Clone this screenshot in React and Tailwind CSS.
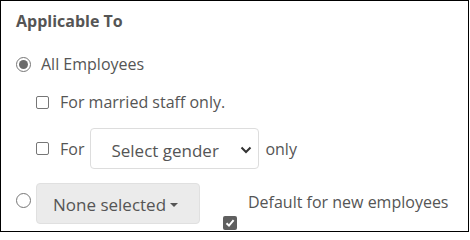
import React from "react";

function Radio({ checked }) {
  return (
    <div className="w-[15px] h-[15px] rounded-full border border-[#767676] bg-white flex items-center justify-center shrink-0">
      {checked && <div className="w-[9px] h-[9px] rounded-full bg-[#6b6b6b]" />}
    </div>
  );
}

function Box({ checked }) {
  if (checked) {
    return (
      <div className="w-[14px] h-[14px] rounded-[2px] bg-[#5f5f5f] flex items-center justify-center shrink-0">
        <svg width="10" height="10" viewBox="0 0 10 10">
          <path d="M1.5 5.2 L4 7.6 L8.6 2.2" fill="none" stroke="white" strokeWidth="2" />
        </svg>
      </div>
    );
  }
  return <div className="w-[13px] h-[13px] rounded-[2px] border border-[#767676] bg-white shrink-0" />;
}

export default function App() {
  return (
    <div
      className="w-[469px] h-[232px] border border-black bg-white text-[#555] flex flex-col pl-[15px] pt-[10px]"
      style={{ fontFamily: '"Open Sans", sans-serif' }}
    >
      <div className="text-[16px] leading-[20px] font-bold">Applicable To</div>
      <div className="mt-[22px] flex items-center h-[22px] text-[16px] leading-[22px]">
        <Radio checked />
        <span className="ml-[10px]">All Employees</span>
      </div>
      <div className="mt-[16px] ml-[20px] flex items-center h-[22px] text-[16px] leading-[22px]">
        <Box />
        <span className="ml-[11px]">For married staff only.</span>
      </div>
      <div className="mt-[15px] ml-[20px] flex items-center h-[41px] text-[16px] leading-[22px]">
        <Box />
        <span className="ml-[11px]">For</span>
        <div className="ml-[6px] w-[169px] h-[41px] rounded-[4px] border border-[#ddd] bg-white flex items-center pl-[20px] pr-[6px] pt-[4px] text-[17px]">
          <span className="flex-1">Select gender</span>
          <svg width="12" height="8" viewBox="0 0 12 8" className="mt-[-2px]">
            <path d="M1.5 1.5 L6 6 L10.5 1.5" fill="none" stroke="#333" strokeWidth="2" />
          </svg>
        </div>
        <span className="ml-[6px]">only</span>
      </div>
      <div className="mt-[14px] flex items-start text-[16px] leading-[22px]">
        <div className="mt-[10px]">
          <Radio />
        </div>
        <div className="ml-[5px] w-[164px] h-[41px] rounded-[4px] border border-[#e0e0e0] bg-[#ebebeb] flex items-center pl-[16px] pt-[2px] text-[17px]">
          <span>None selected</span>
          <span className="ml-[4px] w-0 h-0 border-t-[4px] border-t-[#555] border-x-[4px] border-x-transparent" />
        </div>
        <div className="ml-[23px] mt-[33px]">
          <Box checked />
        </div>
        <span className="ml-[11px] mt-[8px]">Default for new employees</span>
      </div>
    </div>
  );
}
